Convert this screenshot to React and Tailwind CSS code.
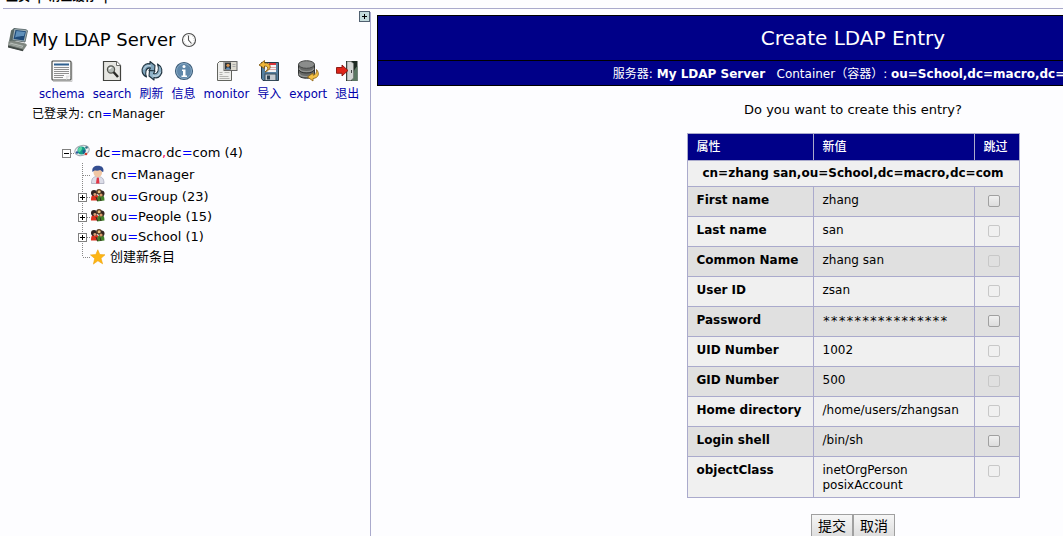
import React from "react";

const NARROW = "font-['DejaVu_Sans_Condensed','Noto_Sans_CJK_SC',sans-serif]";
const WIDE = "font-['DejaVu_Sans','Noto_Sans_CJK_SC',sans-serif]";

function ServerIcon() {
  return (
    <svg className="shrink-0" width="24" height="24" viewBox="0 0 24 24" aria-hidden="true">
      <path d="M4 2.500l3-2.200 3 .7-3 14-5-1.500z" fill="#5d6b66" />
      <path d="M7 .5l12 1.200 1.500 1-2.500 11.300-13-2z" fill="#9fb0b5" stroke="#4a595c" strokeWidth=".8" />
      <path d="M8.500 2l10.500 1.200-2.200 9.300L6.500 11z" fill="#1f4a78" />
      <path d="M9.500 3l8.500 1-1 4C13.500 8 11 8.500 8 9.500z" fill="#5f90ba" />
      <path d="M1.500 13.500l4-1 13 3 1.500 1.500-4 6-15-4z" fill="#7d857f" />
      <path d="M1 17.500l15 4v1.800l-15-3.800z" fill="#3f4744" />
      <path d="M3.500 14.500l13 3-1.500 2.500-13-3.500z" fill="#b9c0bb" />
      <path d="M3 16l12 3M5 14.500l11 2.800" stroke="#858e88" strokeWidth=".8" />
    </svg>
  );
}

function ClockIcon() {
  return (
    <svg className="shrink-0" width="16" height="16" viewBox="0 0 16 16" aria-hidden="true">
      <circle cx="8" cy="8" r="6.500" fill="#fff" stroke="#4b4b4b" strokeWidth="1.100" />
      <circle cx="8" cy="8" r="5" fill="none" stroke="#c8c8c8" strokeWidth="1" strokeDasharray="1 1.600" />
      <path d="M7.500 3.500v4.500l3 3.500" fill="none" stroke="#555" strokeWidth="1.100" />
    </svg>
  );
}

function SchemaIcon() {
  return (
    <svg width="24" height="24" viewBox="0 0 24 24" aria-hidden="true">
      <path d="M3 22.500h19v-19" fill="none" stroke="#c9c9c9" />
      <rect x="2" y="2" width="19" height="19" rx="1" fill="#fafafa" stroke="#4a4c48" strokeWidth="1.200" />
      <path d="M4 5.500h15" stroke="#2f6090" strokeWidth="2" />
      <path d="M4 8.500h15M4 10.500h15M4 12.500h15M4 14.500h15M4 16.500h10M4 18.500h9" stroke="#8f8f8f" />
      <path d="M16 21v-4.500h4.500z" fill="#e4e4e4" />
    </svg>
  );
}

function SearchIcon() {
  return (
    <svg width="24" height="24" viewBox="0 0 24 24" aria-hidden="true">
      <path d="M3.500 2.500h13l4 4v15h-17z" fill="#e6e6e2" stroke="#41423e" strokeWidth="1.200" />
      <path d="M16.500 2.500v4h4" fill="#fff" stroke="#6c6c68" />
      <circle cx="11" cy="10.500" r="3.600" fill="#b4bab6" stroke="#555750" strokeWidth="1.200" />
      <path d="M9 10l2.500-1.800" stroke="#fff" strokeWidth="1.300" />
      <path d="M13.500 13l4.500 5" stroke="#2b2b28" strokeWidth="2.500" />
    </svg>
  );
}

function RefreshIcon() {
  return (
    <svg width="24" height="24" viewBox="0 0 24 24" aria-hidden="true">
      <g stroke="#20333f" strokeWidth="1.100" strokeLinejoin="round">
        <path d="M6.500 18C1.500 15.500 1 10.500 3.500 7 5.500 4.600 8 4.200 10 5V2.500l5 4-.5 5.500-5.500-.5 1.500-2.500C8.500 8.500 6.800 9.500 6 11.800c-.6 2-.3 4.200.5 6.200z" fill="#7fa5bd" />
        <path d="M17.500 5c4.800 2.500 5.500 7.800 3 11.300-1.800 2.400-4.500 2.900-6.500 2.200V21l-5-4 .5-5.500 5.500.5-1.500 2.500c2 .8 3.700-.3 4.500-2.600.6-2 .3-4.900-.5-6.900z" fill="#8fb3c9" />
      </g>
      <path d="M3.800 10.500C5 7 8 6 11 7M20.300 13c-1.300 4-4.300 4.600-7.500 3.800" fill="none" stroke="#d3e2ea" />
    </svg>
  );
}

function InfoIcon() {
  return (
    <svg width="24" height="24" viewBox="0 0 24 24" aria-hidden="true">
      <circle cx="12" cy="12" r="8.500" fill="#6088aa" stroke="#41617c" strokeWidth="1.200" />
      <circle cx="12" cy="12" r="7.500" fill="none" stroke="#86a7c2" />
      <circle cx="12" cy="7.500" r="1.500" fill="#fff" />
      <path d="M10 10.500h3.500v6H15v1.500H9.500v-1.500H11V12h-1z" fill="#fff" />
    </svg>
  );
}

function MonitorIcon() {
  return (
    <svg width="24" height="24" viewBox="0 0 24 24" aria-hidden="true">
      <path d="M5.500 2.500h12v19h-14v-17z" fill="#eeeeec" stroke="#62645f" />
      <path d="M5.500 13.500h3M5.500 15.500h3M5.500 17.500h9M5.500 19.500h10M10.500 13.500h5" stroke="#b3b3b0" />
      <rect x="10" y="2.500" width="13" height="9" fill="#dcd9cf" stroke="#666" />
      <rect x="11" y="3.500" width="6" height="7" fill="#2e3438" />
      <circle cx="14" cy="6.300" r="1.600" fill="#d69250" />
      <path d="M12 10.500c0-3 4-3 4 0z" fill="#5d8dbb" />
      <path d="M18.500 5.500h3M18.500 7.500h3" stroke="#aaa" />
    </svg>
  );
}

function ImportIcon() {
  return (
    <svg width="24" height="24" viewBox="0 0 24 24" aria-hidden="true">
      <path d="M4.500 3.500h17v18H6l-1.500-2z" fill="#557f9f" stroke="#263a48" />
      <rect x="8" y="4" width="11" height="9" fill="#f3f3f3" />
      <path d="M12 4h7v2h-7z" fill="#d9333a" />
      <path d="M10 8.500h9M10 10.500h9" stroke="#e0a5a5" />
      <rect x="8" y="15" width="11" height="6.500" fill="#c4cbd0" stroke="#344a59" />
      <path d="M10 16.500h3v4h-3z" fill="#2e4352" />
      <path d="M8 13c4-3 3.500-6-.5-6v2.500L2 6l5.500-4.500V4c7-.5 8 6.500.5 9z" fill="#eeb63a" stroke="#77500b" strokeWidth=".8" />
    </svg>
  );
}

function ExportIcon() {
  return (
    <svg width="24" height="24" viewBox="0 0 24 24" aria-hidden="true">
      <path d="M2.500 5.500v10c0 5 16 5 16 0v-10z" fill="#686a69" stroke="#303231" />
      <path d="M3 9.500c1 4 14 4 15 0M3 14.500c1 4 14 4 15 0" fill="none" stroke="#949695" strokeWidth="1.200" />
      <path d="M3 11c1 4 14 4 15 0" fill="none" stroke="#303231" />
      <ellipse cx="10.500" cy="5.500" rx="8" ry="3.800" fill="#8b8d8c" stroke="#464847" />
      <path d="M20.500 10.500c3.500 4 2 8.500-3.500 9v2.500l-5.500-4 5.500-4v2.200c2.500 0 4-2.700 3.500-5.700z" fill="#f3c147" stroke="#8b5f10" strokeWidth=".8" />
    </svg>
  );
}

function LogoutIcon() {
  return (
    <svg width="24" height="24" viewBox="0 0 24 24" aria-hidden="true">
      <path d="M11 2h11.500v20H11z" fill="#1d2a22" />
      <path d="M17 22c0-7 2-12 5.500-15v15z" fill="#5b7762" />
      <path d="M12 2.500h4l2.500 2V19L16 21.500h-4z" fill="#d2d5d3" stroke="#70736f" strokeWidth=".7" />
      <path d="M16.500 11v3" stroke="#444" />
      <path d="M1.500 8.500H7V6l6 5.500L7 17v-2.700H1.500z" fill="#df2418" stroke="#82120c" strokeWidth=".9" />
    </svg>
  );
}

function GlobeIcon() {
  return (
    <svg className="shrink-0" width="16" height="20" viewBox="0 0 16 20" aria-hidden="true">
      <ellipse cx="8" cy="7.500" rx="7.300" ry="5" transform="rotate(-14 8 7.500)" fill="#eef0f2" stroke="#a3aab1" />
      <circle cx="7.500" cy="7.500" r="4" fill="#169b87" />
      <path d="M4 6c2-3 5-2 4 0S6 9.500 4.500 9z" fill="#5bd6a4" />
      <path d="M8.500 7.500l3-1c.5 3-1 4-2.500 4.500z" fill="#1d5d93" />
      <circle cx="3" cy="9.500" r="1.200" fill="#285c9e" />
      <circle cx="12.500" cy="4.500" r="1.300" fill="#2f6d85" />
      <circle cx="12" cy="11" r="1.300" fill="#d43a2d" />
    </svg>
  );
}

function PersonIcon() {
  return (
    <svg className="shrink-0" width="16" height="20" viewBox="0 0 16 20" aria-hidden="true">
      <path d="M1.500 18.500c0-5 1.500-7 6-7s6.500 2 6.500 7z" fill="#dcdde8" stroke="#a8aabb" strokeWidth=".8" />
      <path d="M6.800 12.500h2l.7 6H6z" fill="#e13545" />
      <ellipse cx="7.800" cy="7.500" rx="4.300" ry="4.700" fill="#f0c6a4" />
      <path d="M2.500 7C1.500 2.500 4.500.8 8 .8s6.500 2 5.200 6.200c-1.500-.2-2-1.500-3-2-2 1-5 .5-5.700.5z" fill="#344e91" />
    </svg>
  );
}

function GroupIcon() {
  return (
    <svg className="shrink-0" width="16" height="16" viewBox="0 0 16 16" aria-hidden="true">
      <path d="M1 11.500c0-5 1-6 4-6s4 2 4 6z" fill="#d7321f" />
      <path d="M7 12.500c0-5 1.500-7 4-7s3.500 2 3.500 6z" fill="#44802b" />
      <circle cx="4" cy="4" r="3" fill="#2f2320" />
      <circle cx="9" cy="2.800" r="2.800" fill="#5c4026" />
      <circle cx="11.500" cy="4.500" r="3" fill="#382722" />
      <circle cx="4.800" cy="5.500" r="1.400" fill="#d99d72" />
      <circle cx="9.200" cy="2.700" r="1.500" fill="#e8bf7c" />
      <circle cx="11" cy="6" r="1.600" fill="#d89a68" />
      <path d="M6 8l1.500 4M10 8.500l1 3.500" stroke="#302b20" />
    </svg>
  );
}

function StarIcon() {
  return (
    <svg className="shrink-0" width="16" height="16" viewBox="0 0 16 16" aria-hidden="true">
      <path d="M7.800.8l2 4.700 5.200.3-4 3.500 1.600 5.500-4.700-3-4.500 3.300 1.300-5.600L.5 5.900l5.300-.4z" fill="#fcb514" stroke="#f0a30a" strokeWidth=".6" />
    </svg>
  );
}

function Branch({ height, box, last }) {
  const mid = height / 2;
  return (
    <svg className="shrink-0" width="16" height={height} viewBox={`0 0 16 ${height}`} aria-hidden="true">
      <path d={`M8.500 0V${last ? mid : height}`} stroke="#888" strokeDasharray="1 1" />
      <path d={`M9 ${mid + 0.5}H16`} stroke="#888" strokeDasharray="1 1" />
      {box && (
        <g>
          <rect x="4.500" y={mid - 3.5} width="8" height="8" fill="#fff" stroke="#808080" />
          <path d={`M6 ${mid + 0.5}h5M8.500 ${mid - 2}v5`} stroke="#000" />
        </g>
      )}
    </svg>
  );
}

const tools = [
  ["schema", SchemaIcon],
  ["search", SearchIcon],
  ["刷新", RefreshIcon, true],
  ["信息", InfoIcon, true],
  ["monitor", MonitorIcon],
  ["导入", ImportIcon, true],
  ["export", ExportIcon],
  ["退出", LogoutIcon, true],
];

const groups = [
  ["Group", 23],
  ["People", 15],
  ["School", 1],
];

const attributes = [
  ["First name", ["zhang"], true],
  ["Last name", ["san"], false],
  ["Common Name", ["zhang san"], false],
  ["User ID", ["zsan"], false],
  ["Password", ["****************"], true],
  ["UID Number", ["1002"], false],
  ["GID Number", ["500"], false],
  ["Home directory", ["/home/users/zhangsan"], false],
  ["Login shell", ["/bin/sh"], true],
  ["objectClass", ["inetOrgPerson", "posixAccount"], false],
];

const Eq = () => <span className="text-[#0000ff]">=</span>;

function Sidebar() {
  return (
    <aside className="w-[368px] shrink-0 border-r border-[#aaaacc]">
      <div className="flex justify-end pr-px">
        <button aria-label="+" className="flex size-[9px] items-center justify-center bg-[#c4dcdc] outline outline-[#506070]">
          <svg width="7" height="7" viewBox="0 0 7 7" aria-hidden="true">
            <path d="M1 3.500h5M3.500 1v5" stroke="#000" />
          </svg>
        </button>
      </div>
      <div className="mt-[7px] flex items-center pl-1">
        <ServerIcon />
        <h1 className="ml-px mr-[6px] whitespace-nowrap text-[18px] leading-6">My LDAP Server</h1>
        <ClockIcon />
      </div>
      <nav className="mt-[7px] flex gap-2 pl-9">
        {tools.map(([label, Icon, cjk]) => (
          <a
            key={label}
            href="#"
            className={`flex flex-col items-center gap-[2px] whitespace-nowrap leading-[18px] text-[#0000aa] ${NARROW} ${cjk ? "text-[12px]" : "text-[13px]"}`}
          >
            <Icon />
            <span>{label}</span>
          </a>
        ))}
      </nav>
      <p className="mt-px pl-[29px] text-[12px] leading-5">
        已登录为: cn<Eq />Manager
      </p>
      <ul className="mt-[19px] pl-[58px] text-[13px]">
        <li className="flex h-5 items-center">
          <svg className="shrink-0" width="13" height="20" viewBox="0 0 13 20" aria-hidden="true">
            <rect x="1.500" y="6.500" width="8" height="8" fill="#fff" stroke="#808080" />
            <path d="M3 10.500h5" stroke="#000" />
            <path d="M10 10.500h3" stroke="#888" strokeDasharray="1 1" />
          </svg>
          <GlobeIcon />
          <a href="#" className="ml-[5px]">
            dc<Eq />macro<span className="text-[#ff0055]">,</span>dc<Eq />com (4)
          </a>
        </li>
        <li className="flex h-6 items-center pl-[13px]">
          <Branch height={24} />
          <PersonIcon />
          <a href="#" className="ml-[5px]">cn<Eq />Manager</a>
        </li>
        {groups.map(([name, count]) => (
          <li key={name} className="flex h-5 items-center pl-[13px]">
            <Branch height={20} box />
            <GroupIcon />
            <a href="#" className="ml-[5px]">ou<Eq />{name} ({count})</a>
          </li>
        ))}
        <li className="flex h-5 items-center pl-[13px]">
          <Branch height={20} last />
          <StarIcon />
          <a href="#" className="ml-1">创建新条目</a>
        </li>
      </ul>
    </aside>
  );
}

function EntryTable() {
  return (
    <table className="mt-[14px] border-collapse text-left text-[12px] leading-[15px]">
      <colgroup>
        <col className="w-[126px]" />
        <col className="w-[161px]" />
        <col className="w-[45px]" />
      </colgroup>
      <thead>
        <tr className="h-[27px] bg-[#000088] text-white">
          {["属性", "新值", "跳过"].map((h) => (
            <th key={h} className="whitespace-nowrap border border-[#aaaacc] px-[9px] font-medium">{h}</th>
          ))}
        </tr>
        <tr className="h-[26px] bg-[#f0f0f0]">
          <th colSpan={3} className="whitespace-nowrap border border-[#aaaacc] text-center">
            cn=zhang san,ou=School,dc=macro,dc=com
          </th>
        </tr>
      </thead>
      <tbody>
        {attributes.map(([name, values, enabled], i) => (
          <tr key={name} className="h-[30px] bg-[#f0f0f0] align-top odd:bg-[#e0e0e0]">
            <th scope="row" className="whitespace-nowrap border border-[#aaaacc] px-[9px] pb-1 pt-[6px]">
              <label htmlFor={`skip-${i}`}>{name}</label>
            </th>
            <td className="whitespace-nowrap border border-[#aaaacc] px-[9px] pb-1 pt-[6px]">
              {values.map((v) => (
                <div key={v} className={name === "Password" ? "font-['DejaVu_Sans_Mono',monospace] text-[13px] leading-[15px]" : ""}>
                  {v}
                </div>
              ))}
            </td>
            <td className="border border-[#aaaacc] px-[10px] pt-2">
              <input
                id={`skip-${i}`}
                type="checkbox"
                disabled={!enabled}
                className="ml-[3px] block size-3 appearance-none rounded-xs border border-[#a0a0a0] bg-linear-to-b from-[#f0f0f0] to-[#dddddd] disabled:border-[#c8c8c8] disabled:from-transparent disabled:to-transparent"
              />
            </td>
          </tr>
        ))}
      </tbody>
    </table>
  );
}

export default function App() {
  const button =
    "h-6 border border-[#a0a0a0] bg-linear-to-b from-[#f6f6f6] to-[#dddddd] px-[6px] text-[14px] leading-5";
  return (
    <div className={`h-screen overflow-hidden bg-[#fdfdff] pl-[3px] text-black ${WIDE}`}>
      <header className="flex h-[9px] items-end overflow-hidden border-b border-[#aaaacc] pb-1">
        <div className="flex gap-[7px] whitespace-nowrap pl-[3px] text-[12px] font-bold leading-[14px]">
          <a href="#">主页</a>
          <span>|</span>
          <a href="#">清空缓存</a>
          <span>|</span>
        </div>
      </header>
      <div className="flex min-h-full pt-[3px]">
        <Sidebar />
        <main className="ml-[6px] mt-[3px] flex min-w-[952px] flex-1 flex-col items-center">
          <div className="self-stretch border border-black bg-[#000088] text-center text-white">
            <h2 className="border-b border-black py-2 text-[20px] leading-7">Create LDAP Entry</h2>
            <p className="whitespace-nowrap pb-[3px] pt-[5px] text-[12px] leading-4">
              服务器: <b>My LDAP Server</b> &nbsp; Container（容器）: <b>ou=School,dc=macro,dc=com</b>
            </p>
          </div>
          <p className="mt-[15px] text-[13px] leading-[18px]">Do you want to create this entry?</p>
          <EntryTable />
          <div className="mt-4 flex">
            <button className={button}>提交</button>
            <button className={button}>取消</button>
          </div>
        </main>
      </div>
    </div>
  );
}
